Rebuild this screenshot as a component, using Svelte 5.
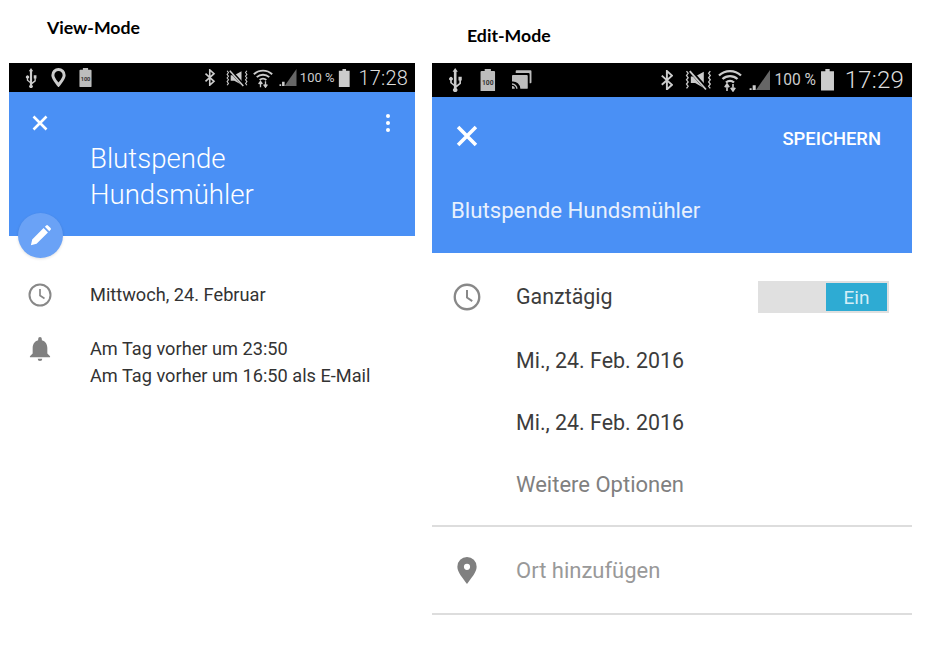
<script>
  const viewLines = ['Am Tag vorher um 23:50', 'Am Tag vorher um 16:50 als E-Mail'];
  const editDates = ['Mi., 24. Feb. 2016', 'Mi., 24. Feb. 2016'];
</script>

{#snippet usb()}
  <svg class="ic usb" viewBox="0 0 12 22" fill="#ccc"><path d="M6 0l2.400 3.500H7.200v12.300l2.600-2.100V11.500H9V8h3v3.500h-.7v3L7.200 17.800v.8a2 2 0 1 1-2.400 0v-2.100L1.400 13.800v-2.300a1.700 1.700 0 1 1 1.500 0v1.700l1.900 1.600V3.500H3.600z"/></svg>
{/snippet}

{#snippet battery100()}
  <svg class="ic batt100" viewBox="0 0 14 22">
    <path d="M4 0h6v2h3a1 1 0 0 1 1 1v18a1 1 0 0 1-1 1H1a1 1 0 0 1-1-1V3a1 1 0 0 1 1-1h3z" fill="#bdbdbd"/>
    <text x="7" y="15" text-anchor="middle" font-size="6.500" font-weight="700" fill="#333">100</text>
  </svg>
{/snippet}

{#snippet statusRight(time)}
  <svg class="ic bt" viewBox="0 0 12 20" fill="none" stroke="#ccc" stroke-width="1.900"><path d="M1 5.500l10 9-5 4.500V1l5 4.500-10 9"/></svg>
  <svg class="ic mute" viewBox="0 0 26 20" fill="none" stroke="#ccc">
    <path d="M2 2l1.500 2-1.500 2 1.500 2-1.500 2 1.500 2-1.500 2 1.500 2-1.500 2M24 2l-1.500 2 1.500 2-1.500 2 1.500 2-1.500 2 1.500 2-1.500 2 1.500 2" stroke-width="1.200"/>
    <path d="M6 7h4l8-4.500v15L10 13H6z" fill="#ccc" stroke="none"/>
    <path d="M5 1l16 18" stroke="#000" stroke-width="3.500"/>
    <path d="M5 2l15 17" stroke-width="1.700"/>
  </svg>
  <svg class="ic wifi" viewBox="0 0 24 22" fill="none" stroke="#ccc" stroke-width="2.300">
    <path d="M1 6.500a16 16 0 0 1 22 0M4.500 10a11 11 0 0 1 15 0M8 13.500a6 6 0 0 1 8 0"/>
    <path d="M9 22v-6M6.800 18.200L9 15l2.200 3.200M15 15v6M12.800 18.800L15 22l2.200-3.200" stroke-width="1.600"/>
  </svg>
  <svg class="ic signal" viewBox="0 0 20 20">
    <path d="M20 0v20H6z" fill="#666"/>
    <path d="M0 20h2v-2H0zM3 20h3v-5H3z" fill="#ccc"/>
  </svg>
  <span class="pct">100 %</span>
  <svg class="ic batt" viewBox="0 0 12 20" fill="#ccc"><path d="M4 0h4v2h4v18H0V2h4z"/></svg>
  <span class="time">{time}</span>
{/snippet}

{#snippet clock()}
  <svg class="clock" viewBox="0 0 24 24" fill="none" stroke="#888" stroke-width="2"><circle cx="12" cy="12" r="10.500"/><path d="M12 6v6.500l4.500 3" stroke-width="1.700"/></svg>
{/snippet}

{#snippet close()}
  <svg class="close" viewBox="0 0 16 16" fill="none" stroke="#fff" stroke-width="2.600"><path d="M1.500 1.500l13 13M14.500 1.500l-13 13"/></svg>
{/snippet}

<div class="page">
  <section class="col view">
    <h2 class="label">View-Mode</h2>
    <div class="status">
      {@render usb()}
      <svg class="ic loc" viewBox="0 0 16 20" fill="none" stroke="#ccc" stroke-width="3.200"><path d="M8 18C5 14 2 11 2 7.500a6 6 0 0 1 12 0C14 11 11 14 8 18z"/></svg>
      {@render battery100()}
      <div class="spacer"></div>
      {@render statusRight('17:28')}
    </div>
    <header class="bar">
      <div class="bar-top">
        {@render close()}
        <svg class="dots" viewBox="0 0 4 18" fill="#fff"><circle cx="2" cy="2" r="2"/><circle cx="2" cy="9" r="2"/><circle cx="2" cy="16" r="2"/></svg>
      </div>
      <h1 class="title">Blutspende<br />Hundsmühler</h1>
      <div class="fab">
        <svg viewBox="0 0 24 24" fill="#fff"><path d="M1 23l1.500-6.500L15.500 3.500l5 5L7.500 21.500zM17 2l1.500-1.500a1.500 1.500 0 0 1 2 0l3 3a1.500 1.500 0 0 1 0 2L22 7z"/></svg>
      </div>
    </header>
    <div class="details">
      <div class="row">
        <div class="icon-cell">{@render clock()}</div>
        <div class="line">Mittwoch, 24. Februar</div>
      </div>
      <div class="row">
        <div class="icon-cell">
          <svg class="bell" viewBox="0 0 24 26" fill="#808080"><path d="M12 0a2 2 0 0 1 2 2v1.500c4 1 6 4.500 6 8.500v6l3 3v1H1v-1l3-3v-6c0-4 2-7.500 6-8.500V2a2 2 0 0 1 2-2zM9.500 23.500h5a2.500 2.500 0 0 1-5 0z"/></svg>
        </div>
        <div>
          {#each viewLines as line}
            <div class="line">{line}</div>
          {/each}
        </div>
      </div>
    </div>
  </section>

  <section class="col edit">
    <h2 class="label">Edit-Mode</h2>
    <div class="status">
      {@render usb()}
      {@render battery100()}
      <svg class="ic cast" viewBox="0 0 22 20" fill="#bdbdbd">
        <path d="M4 3V1a1 1 0 0 1 1-1h15a1 1 0 0 1 1 1v12a1 1 0 0 1-1 1h-1V4a1 1 0 0 0-1-1z"/>
        <path d="M1 5h15a1 1 0 0 1 1 1v13a1 1 0 0 1-1 1H9a8 8 0 0 0-9-8V6a1 1 0 0 1 1-1z"/>
        <path d="M0 14a6 6 0 0 1 6 6H4.500A4.500 4.500 0 0 0 0 15.500zM0 17a3 3 0 0 1 3 3H0z"/>
      </svg>
      <div class="spacer"></div>
      {@render statusRight('17:29')}
    </div>
    <header class="bar">
      <div class="bar-top">
        {@render close()}
        <span class="save">SPEICHERN</span>
      </div>
      <h1 class="title">Blutspende Hundsmühler</h1>
    </header>
    <div class="form">
      <div class="row first">
        <div class="icon-cell">{@render clock()}</div>
        <div class="field">Ganztägig</div>
        <div class="toggle"><span>Ein</span></div>
      </div>
      {#each editDates as date}
        <div class="row"><div class="icon-cell"></div><div class="field">{date}</div></div>
      {/each}
      <div class="row"><div class="icon-cell"></div><div class="field muted">Weitere Optionen</div></div>
      <div class="section">
        <div class="row">
          <div class="icon-cell">
            <svg class="pin" viewBox="0 0 20 28" fill="#808080"><path fill-rule="evenodd" d="M10 0a10 10 0 0 1 10 10c0 6-6 12-10 18C6 22 0 16 0 10A10 10 0 0 1 10 0zm0 7a3.200 3.200 0 1 0 0 6.400A3.200 3.200 0 0 0 10 7z"/></svg>
          </div>
          <div class="field muted light">Ort hinzufügen</div>
        </div>
      </div>
    </div>
  </section>
</div>

<style>
  :global(body) {
    margin: 0;
    background: #fff;
  }

  .page {
    display: flex;
    align-items: flex-start;
    height: 667px;
    overflow: hidden;
    font-family: Roboto, "Liberation Sans", sans-serif;
  }

  .col {
    display: flex;
    flex-direction: column;
  }

  .view {
    width: 406px;
    margin-left: 9px;
  }

  .edit {
    width: 480px;
    margin-left: 17px;
  }

  .label {
    margin: 0;
    height: 63px;
    box-sizing: border-box;
    font-family: Lato, "Liberation Sans", sans-serif;
    font-size: 17.7px;
    font-weight: 700;
    line-height: 20px;
    color: #000;
  }

  .view .label {
    padding: 18px 0 0 38px;
  }

  .edit .label {
    padding: 26px 0 0 35px;
  }

  /* status bar, sizes scale from font-size */
  .status {
    display: flex;
    align-items: center;
    background: #000;
    color: #ccc;
  }

  .view .status {
    height: 29px;
    font-size: 10px;
    padding: 0 7px 0 16px;
  }

  .edit .status {
    height: 34px;
    font-size: 12px;
    padding: 0 8px 0 16px;
  }

  .spacer {
    flex: 1;
  }

  .ic {
    display: block;
    flex: none;
  }

  .usb {
    width: 1.2em;
    height: 2em;
  }

  .loc {
    width: 1.5em;
    height: 1.9em;
    margin-left: 1.4em;
  }

  .batt100 {
    width: 1.3em;
    height: 1.9em;
    margin-left: 1.3em;
  }

  .cast {
    width: 1.7em;
    height: 1.6em;
    margin-left: 1.3em;
  }

  .edit .batt100 {
    margin-left: 1.5em;
  }

  .bt {
    width: 1.15em;
    height: 1.7em;
  }

  .mute {
    width: 2.4em;
    height: 1.8em;
    margin-left: 0.9em;
  }

  .wifi {
    width: 2em;
    height: 2em;
    margin-left: 0.4em;
  }

  .signal {
    width: 1.8em;
    height: 1.7em;
    margin-left: 0.6em;
  }

  .pct {
    margin-left: 0.25em;
    font-size: 1.3em;
    width: 2.7em;
    white-space: nowrap;
  }

  .batt {
    width: 1.25em;
    height: 1.8em;
    margin-left: 0.3em;
  }

  .time {
    margin-left: 0.4em;
    font-size: 2em;
    font-weight: 300;
    line-height: 1;
    letter-spacing: 0.2px;
    white-space: nowrap;
    color: #ddd;
  }

  .bar {
    position: relative;
    background: #4a90f5;
    color: #fff;
  }

  .bar-top {
    display: flex;
    justify-content: space-between;
    align-items: center;
  }

  .close {
    display: block;
    width: 16px;
    height: 16px;
  }

  .title {
    margin: 0;
    font-weight: 400;
  }

  .view .bar {
    height: 144px;
  }

  .view .bar-top {
    height: 62px;
    margin-bottom: -13px;
    padding: 0 25px 0 23px;
  }

  .dots {
    width: 4px;
    height: 18px;
  }

  .view .title {
    padding-left: 81px;
    font-size: 27.6px;
    font-weight: 300;
    line-height: 36px;
  }

  .fab {
    position: absolute;
    left: 9px;
    bottom: -22px;
    width: 45px;
    height: 45px;
    display: flex;
    align-items: center;
    justify-content: center;
    border-radius: 50%;
    background: #6aa2f6;
    box-shadow: 0 1px 3px rgba(0, 0, 0, 0.12);
  }

  .fab svg {
    width: 21px;
    height: 21px;
  }

  .edit .bar {
    height: 156px;
  }

  .edit .bar-top {
    height: 76px;
    padding: 0 31px 0 24px;
  }

  .edit .close {
    width: 22px;
    height: 22px;
    margin-top: 1px;
  }

  .save {
    margin-top: 6px;
    font-size: 18.4px;
    font-weight: 500;
  }

  .edit .title {
    padding: 20px 0 0 19px;
    font-size: 22.2px;
    line-height: 34px;
    color: #e8f0fd;
  }

  .details {
    padding-top: 45px;
  }

  .details .row {
    display: flex;
    align-items: flex-start;
    margin-bottom: 27px;
  }

  .details .icon-cell {
    width: 62px;
    margin-right: 19px;
    height: 27px;
  }

  .icon-cell {
    flex: none;
    display: flex;
    align-items: center;
    justify-content: center;
  }

  .line {
    font-size: 18.2px;
    line-height: 27px;
    color: #333;
  }

  .clock {
    width: 24px;
    height: 24px;
  }

  .bell {
    width: 22px;
    height: 24px;
  }

  .form {
    padding-top: 13px;
  }

  .form .row {
    display: flex;
    align-items: center;
    height: 62px;
  }

  .form .row.first {
    margin-bottom: 2px;
  }

  .form .icon-cell {
    width: 70px;
    margin-right: 14px;
  }

  .edit .clock {
    width: 28px;
    height: 28px;
    margin-bottom: 1px;
  }

  .field {
    padding-bottom: 2px;
    font-size: 21.4px;
    color: #3c3c3c;
  }

  .muted {
    font-size: 22px;
    color: #808080;
  }

  .light {
    padding-bottom: 0;
    color: #999;
  }

  .toggle {
    display: flex;
    justify-content: flex-end;
    box-sizing: border-box;
    width: 131px;
    height: 32px;
    margin-left: auto;
    margin-right: 23px;
    padding: 2px;
    background: #e0e0e0;
  }

  .toggle span {
    width: 61px;
    background: #2eabd3;
    color: #d4eef7;
    font-size: 19px;
    line-height: 29px;
    text-align: center;
  }

  .section {
    margin-top: 9px;
    border-top: 2px solid #ddd;
    border-bottom: 2px solid #ddd;
  }

  .section .row {
    height: 86px;
  }

  .pin {
    width: 20px;
    height: 27px;
  }
</style>
